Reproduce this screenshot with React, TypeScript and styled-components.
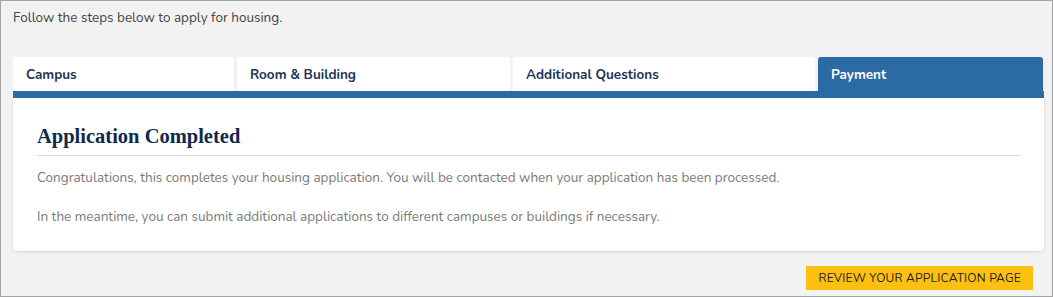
import styled, { createGlobalStyle } from "styled-components";

const GlobalStyle = createGlobalStyle`
  html, body {
    margin: 0;
    padding: 0;
    background: #ffffff;
  }
  body {
    font-family: Nunito, Lato, "Noto Sans", sans-serif;
  }
`;

const Page = styled.div`
  width: 1053px;
  height: 297px;
  box-sizing: border-box;
  border: 1px solid #a3a3a3;
  background: #f2f2f2;
  padding: 8px 8px 0 12px;
  display: flex;
  flex-direction: column;
`;

const Intro = styled.p`
  margin: 0;
  font-size: 13.5px;
  line-height: 18px;
  color: #444444;
`;

const Tabs = styled.div`
  margin-top: 30px;
  display: grid;
  grid-template-columns: 221px 273px 302px 225px;
  column-gap: 3px;
  width: 1031px;
`;

const Tab = styled.div<{ $active?: boolean }>`
  height: 34px;
  box-sizing: border-box;
  padding: 0 13px;
  display: flex;
  align-items: center;
  border-radius: 3px 3px 0 0;
  background: ${(p) => (p.$active ? "#2c6aa5" : "#ffffff")};
  color: ${(p) => (p.$active ? "#ffffff" : "#1c3557")};
  font-size: 13.5px;
  font-weight: 700;
`;

const Bar = styled.div`
  width: 1031px;
  height: 7px;
  background: #2c6aa5;
`;

const Card = styled.div`
  width: 1031px;
  height: 153px;
  box-sizing: border-box;
  background: #ffffff;
  border-radius: 0 0 4px 4px;
  box-shadow: 0 1px 3px rgba(0, 0, 0, 0.12);
  padding: 26px 23px 0 24px;
`;

const Heading = styled.h2`
  margin: 0;
  padding-bottom: 7px;
  border-bottom: 1px solid #dcdcdc;
  font-family: "Liberation Serif", "DejaVu Serif", serif;
  font-size: 20.5px;
  line-height: 24px;
  font-weight: 700;
  color: #0f2a4a;
`;

const Text = styled.p`
  margin: 13px 0 0;
  font-size: 13.5px;
  line-height: 18px;
  color: #7a7a7a;

  & + & {
    margin-top: 21px;
  }
`;

const Footer = styled.div`
  display: flex;
  justify-content: flex-end;
  width: 1031px;
  padding-top: 15px;
`;

const Button = styled.button`
  margin-right: 11px;
  height: 24px;
  padding: 0 12px;
  border: none;
  border-radius: 0;
  background: #fdc010;
  color: #1f1f1f;
  font-family: Nunito, Lato, "Noto Sans", sans-serif;
  font-size: 12px;
  letter-spacing: 0.2px;
  text-transform: uppercase;
  cursor: pointer;
`;

const steps = ["Campus", "Room & Building", "Additional Questions", "Payment"];

const App = () => {
  return (
    <>
      <GlobalStyle />
      <Page>
        <Intro>Follow the steps below to apply for housing.</Intro>
        <Tabs>
          {steps.map((s, i) => (
            <Tab key={s} $active={i === steps.length - 1}>
              {s}
            </Tab>
          ))}
        </Tabs>
        <Bar />
        <Card>
          <Heading>Application Completed</Heading>
          <Text>
            Congratulations, this completes your housing application. You will
            be contacted when your application has been processed.
          </Text>
          <Text>
            In the meantime, you can submit additional applications to different
            campuses or buildings if necessary.
          </Text>
        </Card>
        <Footer>
          <Button>Review your application page</Button>
        </Footer>
      </Page>
    </>
  );
};

export default App;
